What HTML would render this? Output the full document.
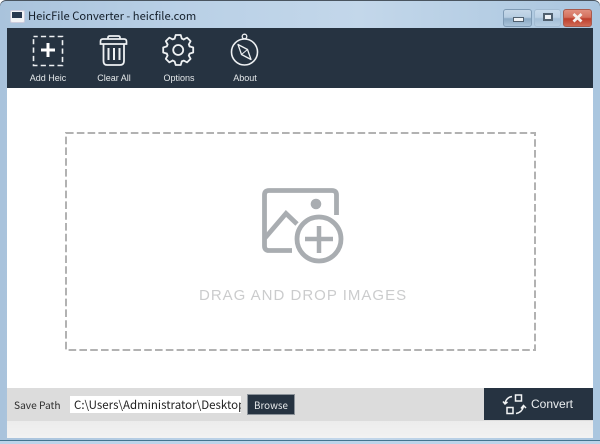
<!DOCTYPE html>
<html><head><meta charset="utf-8"><style>
html,body{margin:0;padding:0;width:600px;height:444px;overflow:hidden;background:#fff}
body{position:relative;font-family:"Liberation Sans",sans-serif}
.a{position:absolute}
.t{position:absolute;white-space:nowrap}
.lb{position:absolute;top:73px;width:70px;text-align:center;color:#e4e8ea;font-size:9px;line-height:11px}
.n{font-family:"Noto Sans CJK SC","Liberation Sans",sans-serif}
</style></head><body>
<div class="a" style="left:0;top:0;width:600px;height:444px;background:linear-gradient(90deg,#a9c3dc 0,#b9d0e6 30%,#c3d7ea 60%,#aac6df 100%);border-radius:6px 6px 0 0;box-shadow:inset 0 1px 0 #4a5560"></div>
<div class="a" style="left:0;top:441px;width:600px;height:3px;background:#bcd4ea"></div>
<div class="a" style="left:0;top:440px;width:600px;height:1px;background:#45748f"></div>
<!-- title icon -->
<div class="a" style="left:10px;top:10px;width:13px;height:11px;background:#f2f3f5;border-radius:2px;border:1px solid #ccd"></div>
<div class="a" style="left:12px;top:12px;width:10px;height:6px;background:#27384e"></div>
<div class="t n" style="left:28px;top:8px;font-size:11.200px;line-height:17px;color:#15202b">HeicFile Converter - heicfile.com</div>
<!-- window buttons -->
<div class="a" style="left:503px;top:9px;width:27px;height:16px;border:1px solid #7f9bb5;border-radius:3px;background:linear-gradient(#c6d8e9 0,#b7cde1 45%,#8ba9c4 55%,#a9c3da 100%)"></div>
<div class="a" style="left:513px;top:17px;width:9px;height:3px;background:#eef2f6;border:1px solid #50606f"></div>
<div class="a" style="left:534px;top:9px;width:25px;height:16px;border:1px solid #a3bcd3;border-radius:3px;background:linear-gradient(#c9dbec 0,#bcd1e5 45%,#a4bfd7 55%,#b7cee2 100%)"></div>
<div class="a" style="left:543px;top:13px;width:6px;height:4px;background:#eef2f6;border:2px solid #50606f;outline:0"></div>
<div class="a" style="left:563px;top:9px;width:27px;height:16px;border:1px solid #a85a4c;border-radius:3px;background:linear-gradient(#e08f7e 0,#d4705d 45%,#bd3f2c 55%,#d06a55 100%)"></div>
<svg class="a" style="left:563px;top:9px" width="29" height="18"><path d="M10.5 5L18.5 12.5M18.5 5L10.5 12.5" stroke="#f6f1ee" stroke-width="2.8"/></svg>
<!-- toolbar -->
<div class="a" style="left:7px;top:28px;width:586px;height:60px;background:#263341"></div>
<svg class="a" style="left:7px;top:28px" width="300" height="46" fill="none" stroke="#eef1f3" stroke-width="1.8">
<!-- add -->
<rect x="26.5" y="8.5" width="29" height="29" stroke-dasharray="5.2 3.2" stroke-dashoffset="1" stroke-width="1.6"/>
<path d="M41 15V29M34 22H48" stroke-width="3" stroke="#fff"/>
<!-- trash -->
<path d="M101 11V9.500Q101 8 103 8H111Q113 8 113 9.500V11" stroke-width="1.700"/>
<path d="M93.500 16V13.500Q93.500 11 96 11H117Q119.500 11 119.500 13.500V16Z" stroke-width="1.700"/>
<path d="M96.500 16V33Q96.500 37 100 37H113Q117 37 117 33V16" stroke-width="1.800"/>
<path d="M101.500 20V32M107 20V32M112.500 20V32" stroke-width="2"/>
<!-- gear -->
<g transform="translate(171.200 22)" stroke-width="1.800" stroke-linejoin="round" stroke-linecap="round">
<path d="M-3.600 -11.400L-2.500 -15H2.500L3.600 -11.400L5.510 -10.600"/>
<path transform="rotate(45)" d="M-3.600 -11.400L-2.500 -15H2.500L3.600 -11.400L5.510 -10.600"/>
<path transform="rotate(90)" d="M-3.600 -11.400L-2.500 -15H2.500L3.600 -11.400L5.510 -10.600"/>
<path transform="rotate(135)" d="M-3.600 -11.400L-2.500 -15H2.500L3.600 -11.400L5.510 -10.600"/>
<path transform="rotate(180)" d="M-3.600 -11.400L-2.500 -15H2.500L3.600 -11.400L5.510 -10.600"/>
<path transform="rotate(225)" d="M-3.600 -11.400L-2.500 -15H2.500L3.600 -11.400L5.510 -10.600"/>
<path transform="rotate(270)" d="M-3.600 -11.400L-2.500 -15H2.500L3.600 -11.400L5.510 -10.600"/>
<path transform="rotate(315)" d="M-3.600 -11.400L-2.500 -15H2.500L3.600 -11.400L5.510 -10.600"/>
<circle r="5" stroke-width="1.800"/>
</g>
<!-- compass -->
<circle cx="237.500" cy="24" r="13" stroke-width="1.6"/>
<circle cx="237.500" cy="8.500" r="2.300" stroke-width="1.300"/>
<path d="M231 16.500L240.500 21.500L244 31.500L234.500 26.500Z" stroke-width="1.300" stroke-linejoin="round"/>
<path d="M234.500 26.500L240.500 21.500" stroke-width="1"/>
</svg>
<div class="lb" style="left:13px">Add Heic</div>
<div class="lb" style="left:79px">Clear All</div>
<div class="lb" style="left:144px">Options</div>
<div class="lb" style="left:210px">About</div>
<!-- main -->
<div class="a" style="left:7px;top:88px;width:586px;height:300px;background:#fff"></div>
<svg class="a" style="left:65px;top:132px" width="472" height="220" fill="none">
<rect x="1" y="1" width="469" height="217" stroke="#b2b2b2" stroke-width="2" stroke-dasharray="7.600 3.200"/>
</svg>
<svg class="a" style="left:255px;top:180px" width="95" height="90" fill="none" stroke="#a9adb1">
<path d="M37 70.500H14Q9.500 70.500 9.500 66V15Q9.500 10.500 14 10.500H77Q81.500 10.500 81.500 15V35" stroke-width="4.800"/>
<path d="M10 58L31 33.500L42 44" stroke-width="4.800"/>
<circle cx="61" cy="24" r="5.300" fill="#a9adb1" stroke="none"/>
<circle cx="64" cy="59" r="22" stroke-width="4.800"/>
<path d="M64 46V73M50 59H78" stroke-width="4.500"/>
</svg>
<div class="t" style="left:199px;top:287px;font-size:15px;line-height:18px;color:#cbcccd;letter-spacing:1px">DRAG AND DROP IMAGES</div>
<!-- bottom -->
<div class="a" style="left:7px;top:388px;width:586px;height:33px;background:#dcdcdc"></div>
<div class="a" style="left:7px;top:421px;width:586px;height:17px;background:linear-gradient(#ececec,#f2f2f2)"></div>
<div class="t n" style="left:14px;top:397px;font-size:10.200px;line-height:16px;color:#2d2d2d">Save Path</div>
<div class="a" style="left:70px;top:396px;width:171px;height:17px;background:#fff;overflow:hidden"><div class="t n" style="left:4px;top:1px;font-size:11.500px;line-height:16px;color:#222">C:\Users\Administrator\Desktop</div></div>
<div class="a" style="left:248px;top:395px;width:46px;height:19px;background:#263341;box-shadow:0 0 0 1px #8b9299"></div>
<div class="t n" style="left:248px;top:397px;width:46px;text-align:center;font-size:9.800px;line-height:16px;color:#e8ebed">Browse</div>
<div class="a" style="left:484px;top:388px;width:109px;height:32px;background:#263341"></div>
<svg class="a" style="left:500px;top:390px" width="30" height="30" fill="none" stroke="#f2f4f5" stroke-width="1.500">
<rect x="15.500" y="5" width="6" height="6"/>
<rect x="7" y="17.500" width="6" height="6"/>
<path d="M12 6.500Q6 7.500 5 13.500M3 11.500L5 14L7.500 12" stroke-width="1.500"/>
<path d="M16 23.500Q22 22.500 23.500 16.500M21 18.500L23.500 15.500L26 18" stroke-width="1.500"/>
</svg>
<div class="t" style="left:531px;top:397px;font-size:12px;line-height:15px;color:#eceff1">Convert</div>
</body></html>
